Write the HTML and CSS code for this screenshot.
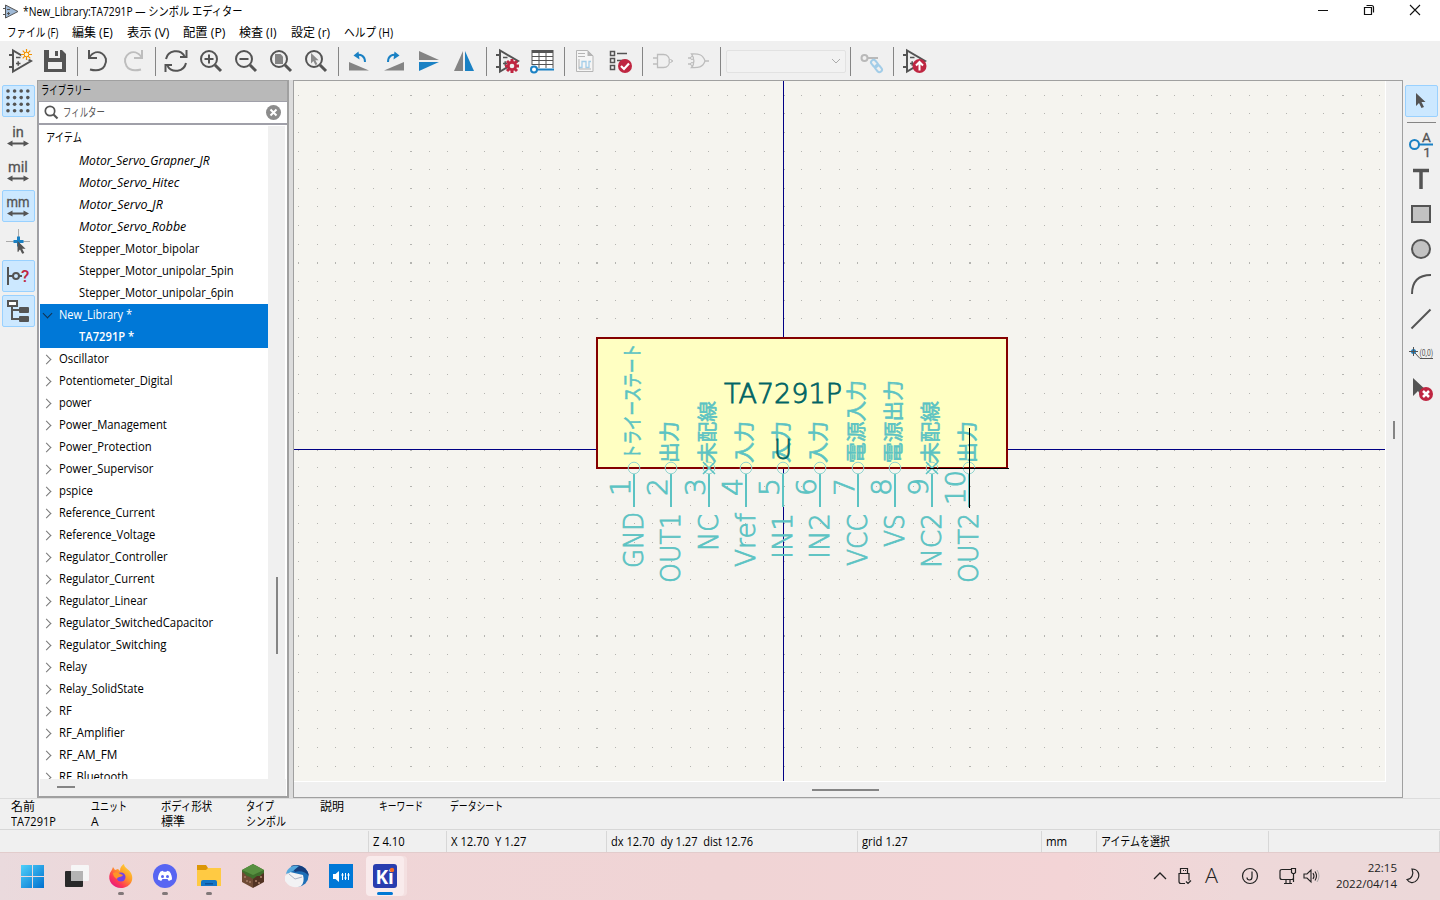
FILE: index.html
```html
<!DOCTYPE html>
<html lang="ja">
<head>
<meta charset="utf-8">
<title>*New_Library:TA7291P — シンボル エディター</title>
<link rel="stylesheet" href="styles.css">
</head>
<body>
<svg width="0" height="0" class="defs">
  <defs>
    <g id="amp"><path d="M5 1.500v21L23 12z M1 6h4 M1 18h4" fill="none" stroke="#545454" stroke-width="2"/><path d="M8 8.500h4.500 M8 14.500h4.500 M10.200 12.200v4.600" stroke="#545454" stroke-width="1.500"/></g>
    <g id="lens"><circle cx="10" cy="10" r="8" fill="none" stroke="#545454" stroke-width="2"/><path d="M16 16l6 6" stroke="#545454" stroke-width="3"/></g>
    <path id="dblarrow" d="M1 19.500l5.500-3v2h11v-2l5.500 3-5.500 3v-2h-11v2z" fill="#545454"/>
    <path id="pointer" d="M0 0v13l3-3 2.500 5 2.500-1-2.500-5h4z" fill="#545454"/>
  </defs>
</svg>
<div class="window">
  <header class="titlebar">
    <svg class="appicon" width="17" height="16" viewBox="0 0 17 16"><path d="M2.500 1v13L15 7.500z" fill="#9fb9d6" stroke="#555"/><path d="M0 4.500h3M0 10.500h3M4 5.500h3M4 9.500h3M5.500 8v3" stroke="#555"/></svg>
    <span class="t" data-w="220">*New_Library:TA7291P — シンボル エディター</span>
    <div class="winctl">
      <svg width="12" height="12"><path d="M1 6.500h10" stroke="#111"/></svg>
      <svg width="12" height="12"><path d="M1.500 3.500h7v7h-7zM3.500 1.500h5q2 0 2 2v5" fill="none" stroke="#111" stroke-width="1.200"/></svg>
      <svg width="12" height="12"><path d="M1 1l10 10M11 1L1 11" stroke="#111" stroke-width="1.100"/></svg>
    </div>
  </header>
  <nav class="menu">
    <span class="m1"><span class="t" data-w="51">ファイル (F)</span></span>
    <span class="m2"><span class="t" data-w="41">編集 (E)</span></span>
    <span class="m3"><span class="t" data-w="42">表示 (V)</span></span>
    <span class="m4"><span class="t" data-w="42">配置 (P)</span></span>
    <span class="m5"><span class="t" data-w="38">検査 (I)</span></span>
    <span class="m6"><span class="t" data-w="39">設定 (r)</span></span>
    <span class="m7"><span class="t" data-w="49">ヘルプ (H)</span></span>
  </nav>
  <div class="toolbar">
    <i><svg viewBox="0 0 24 24"><use href="#amp"/><circle cx="18.500" cy="5.500" r="5.500" fill="#f0f0f0"/><path d="M18.500 0v11M13 5.500h11M14.700 1.700l7.600 7.600M22.300 1.700l-7.600 7.600" stroke="#f29100" stroke-width="1.200"/><circle cx="18.500" cy="5.500" r="2.300" fill="#fff3d0" stroke="#f29100"/></svg></i>
    <i><svg viewBox="0 0 24 24"><path d="M1 1h18l4 4v18H1z" fill="#545454"/><path d="M6 1h11v8H6zM5 13h14v7H5z" fill="#f0f0f0"/><path d="M12 2h3v5h-3z" fill="#545454"/></svg></i>
    <b></b>
    <i><svg viewBox="0 0 24 24"><path d="M3 1v8h8M3.500 8C7 3 12 2 16 4.500S21.500 12 18.500 17 10 22 4 20.500" fill="none" stroke="#545454" stroke-width="2"/></svg></i>
    <i><svg viewBox="0 0 24 24"><path d="M21 1v8h-8M20.500 8C17 3 12 2 8 4.500S2.500 12 5.500 17 14 22 20 20.500" fill="none" stroke="#bdbdbd" stroke-width="2"/></svg></i>
    <b></b>
    <i><svg viewBox="0 0 24 24"><path d="M2 10C4 1 16-.5 20.500 7M22.500 1v7H16M22 14c-2 9-14 10.500-18.500 3M1.500 23v-7H8" fill="none" stroke="#545454" stroke-width="2"/></svg></i>
    <i><svg viewBox="0 0 24 24"><use href="#lens"/><path d="M5.500 10h9M10 5.500v9" stroke="#545454" stroke-width="2"/></svg></i>
    <i><svg viewBox="0 0 24 24"><use href="#lens"/><path d="M5.500 10h9" stroke="#545454" stroke-width="2"/></svg></i>
    <i><svg viewBox="0 0 24 24"><use href="#lens"/><path d="M6 5h5.500L14 7.500V15H6z" fill="#848484"/></svg></i>
    <i><svg viewBox="0 0 24 24"><use href="#lens"/><use href="#pointer" transform="translate(7 4) scale(.8)" opacity=".65"/></svg></i>
    <b></b>
    <i><svg viewBox="0 0 24 24"><path d="M2 13v8.500h20z" fill="#848484"/><path d="M18 13C18 7 14 5 9 6" fill="none" stroke="#1a81c4" stroke-width="2"/><path d="M11.500 2.500L6.500 6.500l6 4z" fill="#1a81c4"/></svg></i>
    <i><svg viewBox="0 0 24 24"><path d="M22 13v8.500H2z" fill="#848484"/><path d="M6 13C6 7 10 5 15 6" fill="none" stroke="#1a81c4" stroke-width="2"/><path d="M12.500 2.500L17.500 6.500l-6 4z" fill="#1a81c4"/></svg></i>
    <i><svg viewBox="0 0 24 24"><path d="M2 2v9h20z" fill="#848484"/><path d="M2 13v9l20-9z" fill="#1a81c4"/></svg></i>
    <i><svg viewBox="0 0 24 24"><path d="M11 2v20H2z" fill="#848484"/><path d="M13 2v20h9z" fill="#1a81c4"/></svg></i>
    <b></b>
    <i><svg viewBox="0 0 24 24"><use href="#amp"/><circle cx="17" cy="17" r="5" fill="#bf2641"/><path d="M17 10v14M10 17h14M12 12l10 10M22 12L12 22" stroke="#bf2641" stroke-width="3"/><circle cx="17" cy="17" r="2.300" fill="#f0f0f0"/></svg></i>
    <i><svg viewBox="0 0 24 24"><path d="M2 1h21v20H2z" fill="#fff"/><path d="M1.500 1h22v3h-22z" fill="#545454"/><path d="M2 4v12M9 4v15M16 4v15M23 4v15M2 7.500h21M2 11.500h21M2 15.500h21" stroke="#545454" fill="none"/><path d="M7 20.500h17" stroke="#1a81c4" stroke-width="2"/><circle cx="4" cy="20.500" r="3" fill="#fff" stroke="#1a81c4" stroke-width="2"/></svg></i>
    <b></b>
    <i><svg viewBox="0 0 24 24"><path d="M3.500 1.500h11L20 7v15.500H3.500z" fill="#f5f5f5" stroke="#b5b5b5"/><path d="M14.500 1v6h6z" fill="#b5b5b5"/><path d="M5 4.500h7M5 7.500h7" stroke="#b5b5b5"/><path d="M6 18.500h3v-6h4v6h3v-6h2" fill="none" stroke="#a3cde8" stroke-width="1.300"/><path d="M6 10v10h12" fill="none" stroke="#b5b5b5"/></svg></i>
    <i><svg viewBox="0 0 24 24"><path d="M2.500 2.500h4v4h-4zM2.500 9.500h4v4h-4zM2.500 16.500h4v4h-4z" fill="none" stroke="#545454" stroke-width="1.500"/><path d="M9 4.500h10M9 11.500h10" stroke="#545454" stroke-width="1.500"/><circle cx="17" cy="17" r="7" fill="#bf2641"/><path d="M13 17l3 3 5-5.500" fill="none" stroke="#fff" stroke-width="2.200"/></svg></i>
    <b></b>
    <i><svg viewBox="0 0 24 24"><path d="M6.500 5.500h6c8 0 8 13 0 13h-6zM2 9h4M2 15h4M20 12h2" fill="none" stroke="#bdbdbd" stroke-width="1.300"/><circle cx="19.500" cy="12" r="1.500" fill="#eee" stroke="#bdbdbd"/></svg></i>
    <i><svg viewBox="0 0 24 24"><path d="M5.500 5c5 0 11-1 13.500 7C16.500 19.500 10.500 18.500 5.500 18.500c3-4 3-9 0-13.500zM2 9h5M2 15h5M19 12h4" fill="none" stroke="#bdbdbd" stroke-width="1.300"/><circle cx="6" cy="9" r="1.500" fill="#eee" stroke="#bdbdbd"/><circle cx="6" cy="15" r="1.500" fill="#eee" stroke="#bdbdbd"/></svg></i>
    <b></b>
    <div class="combo"><svg width="10" height="6"><path d="M1 1l4 4 4-4" fill="none" stroke="#ababab"/></svg></div>
    <b></b>
    <i><svg viewBox="0 0 24 24"><circle cx="4.500" cy="9" r="3" fill="none" stroke="#b9b9b9" stroke-width="2"/><path d="M8 9h10" stroke="#b9b9b9" stroke-width="2"/><g fill="none" stroke="#a3cde8" stroke-width="2"><rect x="10.500" y="12" width="8" height="5" rx="2.500" transform="rotate(50 14.500 14.500)"/><rect x="14.500" y="17" width="8" height="5" rx="2.500" transform="rotate(50 18.500 19.500)"/></g></svg></i>
    <b></b>
    <i><svg viewBox="0 0 24 24"><use href="#amp" x="-1"/><circle cx="16.500" cy="17" r="7" fill="#bf2641"/><path d="M16.500 21.500v-8M13 16.500l3.500-3.500 3.500 3.500" fill="none" stroke="#fff" stroke-width="2"/></svg></i>
  </div>
  <main class="main">
    <aside class="left">
      <i class="on"><svg viewBox="0 0 24 24"><g id="dots" fill="#545454"></g></svg></i>
      <i><svg viewBox="0 0 24 24"><text x="12" y="12.500" class="unit">in</text><use href="#dblarrow"/></svg></i>
      <i><svg viewBox="0 0 24 24"><text x="12" y="12.500" class="unit">mil</text><use href="#dblarrow"/></svg></i>
      <i class="on"><svg viewBox="0 0 24 24"><text x="12" y="12.500" textLength="23" lengthAdjust="spacingAndGlyphs" class="unit">mm</text><use href="#dblarrow"/></svg></i>
      <i><svg viewBox="0 0 24 24"><path d="M0 12.500h24M12.500 0v23" stroke="#aaa"/><path d="M7.500 12.500h10M12.500 7.500v10" stroke="#1a81c4" stroke-width="3"/><use href="#pointer" transform="translate(11.500 12) scale(.85)"/></svg></i>
      <i class="on"><svg viewBox="0 0 24 24"><path d="M2 3v18M2 12h5M13 12h3" stroke="#545454" stroke-width="2"/><circle cx="10" cy="12" r="3" fill="none" stroke="#545454" stroke-width="2"/><text x="15" y="18" class="q">?</text></svg></i>
      <i class="on"><svg viewBox="0 0 24 24"><path d="M2 2h9v5H2zM6 7v13h8M6 11h8" fill="none" stroke="#545454" stroke-width="2"/><path d="M3 3h7v3H3z" fill="#fff"/><rect x="13" y="8" width="10" height="6" rx="1" fill="#545454"/><rect x="13" y="17" width="10" height="6" rx="1" fill="#545454"/></svg></i>
    </aside>
    <section class="library">
      <div class="libhead"><span class="t" data-w="50">ライブラリー</span></div>
      <div class="filter">
        <svg width="15" height="15"><circle cx="6" cy="6" r="4.700" fill="none" stroke="#555" stroke-width="1.700"/><path d="M9.500 9.500l4 4" stroke="#555" stroke-width="2.200"/></svg>
        <span class="t" data-w="42">フィルター</span>
        <svg class="clear" width="15" height="15"><circle cx="7.500" cy="7.500" r="7.500" fill="#8c8c8c"/><path d="M4.500 4.500l6 6M10.500 4.500l-6 6" stroke="#fff" stroke-width="2"/></svg>
      </div>
      <div class="treebox">
        <div class="tree">
          <div class="treehead"><span class="t" data-w="36">アイテム</span></div>
          <div class="row sub it"><span class="t" data-w="131">Motor_Servo_Grapner_JR</span></div>
          <div class="row sub it"><span class="t" data-w="100">Motor_Servo_Hitec</span></div>
          <div class="row sub it"><span class="t" data-w="84">Motor_Servo_JR</span></div>
          <div class="row sub it"><span class="t" data-w="107">Motor_Servo_Robbe</span></div>
          <div class="row sub"><span class="t" data-w="120">Stepper_Motor_bipolar</span></div>
          <div class="row sub"><span class="t" data-w="155">Stepper_Motor_unipolar_5pin</span></div>
          <div class="row sub"><span class="t" data-w="155">Stepper_Motor_unipolar_6pin</span></div>
          <div class="row sel open"><span class="t" data-w="73">New_Library *</span></div>
          <div class="row sel sub bold"><span class="t" data-w="55">TA7291P *</span></div>
          <div class="row lib"><span class="t" data-w="50">Oscillator</span></div>
          <div class="row lib"><span class="t" data-w="114">Potentiometer_Digital</span></div>
          <div class="row lib"><span class="t" data-w="33">power</span></div>
          <div class="row lib"><span class="t" data-w="108">Power_Management</span></div>
          <div class="row lib"><span class="t" data-w="93">Power_Protection</span></div>
          <div class="row lib"><span class="t" data-w="94">Power_Supervisor</span></div>
          <div class="row lib"><span class="t" data-w="34">pspice</span></div>
          <div class="row lib"><span class="t" data-w="96">Reference_Current</span></div>
          <div class="row lib"><span class="t" data-w="96">Reference_Voltage</span></div>
          <div class="row lib"><span class="t" data-w="109">Regulator_Controller</span></div>
          <div class="row lib"><span class="t" data-w="95">Regulator_Current</span></div>
          <div class="row lib"><span class="t" data-w="88">Regulator_Linear</span></div>
          <div class="row lib"><span class="t" data-w="154">Regulator_SwitchedCapacitor</span></div>
          <div class="row lib"><span class="t" data-w="108">Regulator_Switching</span></div>
          <div class="row lib"><span class="t" data-w="28">Relay</span></div>
          <div class="row lib"><span class="t" data-w="85">Relay_SolidState</span></div>
          <div class="row lib"><span class="t" data-w="13">RF</span></div>
          <div class="row lib"><span class="t" data-w="66">RF_Amplifier</span></div>
          <div class="row lib"><span class="t" data-w="58">RF_AM_FM</span></div>
          <div class="row lib"><span class="t" data-w="69">RF_Bluetooth</span></div>
        </div>
        <div class="vbar"><div></div></div>
        <div class="hbar"><div></div></div>
      </div>
    </section>
    <section class="canvas">
      <svg class="sheet" width="1091" height="700" viewBox="294 81 1091 700">
        <path id="grid" fill="#b4b4b0" shape-rendering="crispEdges"/>
        <path d="M783.500 81v700M294 449.500h1091" stroke="#000084" shape-rendering="crispEdges"/>
        <rect x="597" y="338" width="410" height="130" fill="#ffffc2" stroke="#840000" stroke-width="2"/>
        <g id="pins"></g>
        <text x="724" y="403" textLength="118" lengthAdjust="spacingAndGlyphs" class="field">TA7291P</text>
        <text x="774" y="459" textLength="18" lengthAdjust="spacingAndGlyphs" class="field">U</text>
        <path d="M969.500 428v80M929 468.500h80" stroke="#000" shape-rendering="crispEdges"/>
      </svg>
      <div class="cv"><div></div></div>
      <div class="ch"><div></div></div>
    </section>
    <aside class="right">
      <i class="on"><svg viewBox="0 0 24 24"><use href="#pointer" transform="translate(7 4)"/></svg></i>
      <hr>
      <i><svg viewBox="0 0 24 24"><path d="M10 12.500h14" stroke="#1a81c4" stroke-width="2"/><circle cx="5.500" cy="12.500" r="4.500" fill="none" stroke="#1a81c4" stroke-width="2"/><text x="17.500" y="9.500" class="pinlab">A</text><text x="18" y="24.500" class="pinlab">1</text></svg></i>
      <i><svg viewBox="0 0 24 24"><path d="M4 3.500h16M12 3v19" stroke="#545454" stroke-width="3.500"/></svg></i>
      <i><svg viewBox="0 0 24 24"><path d="M3 4h18v16H3z" fill="#c2c2c2" stroke="#545454" stroke-width="2"/></svg></i>
      <i><svg viewBox="0 0 24 24"><circle cx="12" cy="12" r="9" fill="#c2c2c2" stroke="#545454" stroke-width="2"/></svg></i>
      <i><svg viewBox="0 0 24 24"><path d="M3 22C3 10 9 3 22 3" fill="none" stroke="#545454" stroke-width="2"/></svg></i>
      <i><svg viewBox="0 0 24 24"><path d="M2.500 21.500l19-19" stroke="#545454" stroke-width="2"/></svg></i>
      <i><svg viewBox="0 0 24 24"><circle cx="4.500" cy="9.500" r="2.500" fill="#1a81c4"/><path d="M0 9.500h9M4.500 5v9M6 11l5 5.500h13" fill="none" stroke="#545454"/><text x="10.500" y="13.500" textLength="13.500" lengthAdjust="spacingAndGlyphs" class="coord">(0,0)</text></svg></i>
      <i><svg viewBox="0 0 24 24"><path d="M4 1v18l5-5 3 5 6-5z" fill="#545454"/><circle cx="17" cy="17" r="7" fill="#bf2641"/><path d="M14 14l6 6M20 14l-6 6" stroke="#fff" stroke-width="2.500"/></svg></i>
    </aside>
  </main>
  <section class="info">
    <div class="c1"><span class="t" data-w="24">名前</span><span class="t" data-w="45">TA7291P</span></div>
    <div class="c2"><span class="t" data-w="36">ユニット</span><span class="t" data-w="8">A</span></div>
    <div class="c3"><span class="t" data-w="51">ボディ形状</span><span class="t" data-w="24">標準</span></div>
    <div class="c4"><span class="t" data-w="28">タイプ</span><span class="t" data-w="40">シンボル</span></div>
    <div class="c5"><span class="t" data-w="24">説明</span></div>
    <div class="c6"><span class="t" data-w="44">キーワード</span></div>
    <div class="c7"><span class="t" data-w="53">データシート</span></div>
  </section>
  <footer class="status">
    <div class="s0"></div>
    <div class="s1"><span class="t" data-w="32">Z 4.10</span></div>
    <div class="s2"><span class="t" data-w="75">X 12.70&nbsp; Y 1.27</span></div>
    <div class="s3"><span class="t" data-w="142">dx 12.70&nbsp; dy 1.27&nbsp; dist 12.76</span></div>
    <div class="s4"><span class="t" data-w="46">grid 1.27</span></div>
    <div class="s5"><span class="t" data-w="21">mm</span></div>
    <div class="s6"><span class="t" data-w="69">アイテムを選択</span></div>
    <div class="s7"></div>
  </footer>
  <div class="taskbar">
    <div class="apps">
      <i><svg viewBox="0 0 24 24"><defs><linearGradient id="w" x2="1" y2="1"><stop stop-color="#4fd0fa"/><stop offset="1" stop-color="#0070cf"/></linearGradient></defs><path d="M0 1h11v11H0zM12 1h11v11H12zM0 13h11v11H0zM12 13h11v11H12z" fill="url(#w)"/></svg></i>
      <i><svg viewBox="0 0 24 24"><rect y="7" width="18" height="16" rx="1" fill="#292929"/><rect x="6" y="1" width="18" height="16" rx="1" fill="#f6f6f6"/><path d="M6 7h12v10H6z" fill="#b4b4b4"/></svg></i>
      <i class="run"><svg viewBox="0 0 24 24"><defs><linearGradient id="fx" x1="1" x2=".2" y2="1"><stop stop-color="#ffe83b"/><stop offset=".45" stop-color="#ff9a28"/><stop offset=".75" stop-color="#ff3b52"/><stop offset="1" stop-color="#e31587"/></linearGradient></defs><path d="M4 3l2 3 3-1 2 2c0-4 2-6 4-7 0 4 5 5 7 9 4 8-2 15-10 15S-2 17 1 9c1-2 2-3 3-6z" fill="url(#fx)"/><circle cx="12" cy="13" r="4.500" fill="#7542e5"/><path d="M4 9c4-2 6 1 10 2-2 3-5 1-6 4-2-1-4-3-4-6z" fill="#ff9428"/></svg></i>
      <i class="run"><svg viewBox="0 0 24 24"><circle cx="12" cy="12" r="12" fill="#5865f2"/><path d="M7.500 7.500l2.500-.7.500 1h3l.5-1 2.500.7c2 2.500 2.700 6 2.500 8l-3.200 1.500-1.300-2h-5l-1.300 2L5 15.500c-.2-2 .5-5.500 2.500-8z" fill="#fff"/><circle cx="9.500" cy="12.500" r="1.500" fill="#5865f2"/><circle cx="14.500" cy="12.500" r="1.500" fill="#5865f2"/></svg></i>
      <i class="run"><svg viewBox="0 0 24 24"><path d="M0 1h9l2 3h12v7H0z" fill="#dc9605"/><path d="M0 6h9l2-2h13v18H0z" fill="#ffca43"/><path d="M4 22v-4q0-2 2-2h12q2 0 2 2v4z" fill="#1476c6"/><path d="M8 19h8v1.500H8z" fill="#0a529c"/></svg></i>
      <i><svg viewBox="0 0 24 24"><path d="M1 6l11 5v13L1 18z" fill="#6f4a34"/><path d="M23 6l-11 5v13l11-6z" fill="#523222"/><path d="M12 0l11 6v3l-2 1-2 2-3 0-4 3-3-2-3-1-3-3-2-1V6z" fill="#3f6f2c"/><path d="M12 0l11 6-11 5L1 6z" fill="#579040"/><path d="M3 12h2v2H3zM8 17h2v2H8zM14 16h2v2h-2zM19 12h2v2h-2zM5 16h2v2H5zM17 18h2v2h-2z" fill="#98705a"/></svg></i>
      <i><svg viewBox="0 0 24 24"><circle cx="13" cy="12" r="10.500" fill="#1e6fb7"/><path d="M6 2c8-3 17 2 18 10-3-4-9-6-14-4z" fill="#153d7c"/><path d="M0 12l5-4 13 3q2 7-2 11-10 4-16-5z" fill="#f2f2f4"/><path d="M4 10l6 5 7-2" fill="none" stroke="#aab3c5"/><path d="M1 10C2 4 8 0 14 2L8 7z" fill="#54a8dd"/></svg></i>
      <i><svg viewBox="0 0 24 24"><path d="M0 0h24v24H0z" fill="#0078d7"/><path d="M4 10h2.500L10 7v11l-3.500-3H4z" fill="#fff"/><path d="M13.500 9v7M16.500 9v7M19.500 9v7" stroke="#fff"/><path d="M12.500 11h2M15.500 14h2M18.500 11h2" stroke="#fff" stroke-width="1.500"/></svg></i>
      <i class="active"><svg viewBox="0 0 24 24"><rect width="24" height="24" rx="3" fill="#293daf"/><text x="2.500" y="19.500" class="ki">Ki</text><circle cx="19" cy="6" r="2.200" fill="#f56a25"/></svg></i>
    </div>
    <div class="tray">
      <svg width="14" height="24"><path d="M1 15l6-6 6 6" fill="none" stroke="#222" stroke-width="1.300"/></svg>
      <svg class="usb" width="14" height="24"><path d="M3.500 9V4.500h7V9M6 6.500h1M8 6.500h1M8 19.500H4q-2 0-2-2V9.500h10v7M9 17.500l2 2 3-3" fill="none" stroke="#222" stroke-width="1.200"/></svg>
      <svg class="ime" width="14" height="24"><text x="0" y="19" textLength="13" lengthAdjust="spacingAndGlyphs" class="a">A</text></svg>
      <svg class="j" width="18" height="24"><circle cx="9" cy="12" r="7.500" fill="none" stroke="#222" stroke-width="1.200"/><path d="M11 7.500V13q0 3-2.500 3Q6 16 6 13.500" fill="none" stroke="#222" stroke-width="1.200"/></svg>
      <svg class="net" width="18" height="24"><path d="M12 5.500H3q-2 0-2 2v6q0 2 2 2h10q1 0 1-1M5 19.500h8M7 16v3M11 16v3M12.500 4.500h4v4l-1 1h-2l-1-1zM14.500 9v9" fill="none" stroke="#222" stroke-width="1.200"/></svg>
      <svg class="vol" width="18" height="24"><path d="M1 10h3l4-4v12l-4-4H1zM10 9q2 3 0 6M12 7.500q3 4.500 0 9" fill="none" stroke="#222" stroke-width="1.100"/><path d="M14 6q4 6 0 12" fill="none" stroke="#aaa"/></svg>
      <div class="clock"><span>22:15</span><span>2022/04/14</span></div>
      <svg class="moon" width="14" height="24"><path d="M6 5c6 0 9 6 5 11-3 4-8 3-10-.5C6 15 8 10 6 5z" fill="none" stroke="#222" stroke-width="1.200"/></svg>
    </div>
  </div>
</div>
<script src="app.js"></script>
</body>
</html>
```
FILE: styles.css
```css
* { box-sizing: border-box; }
body { margin: 0; width: 1440px; height: 900px; overflow: hidden; font: 12px/16px "Open Sans", "Noto Sans CJK JP", sans-serif; color: #000; }
svg { display: block; flex: none; overflow: visible; }
i { font-style: normal; }
.defs { position: absolute; }
.window { display: flex; flex-direction: column; height: 900px; background: #f0f0f0; }
.t { display: inline-block; white-space: pre; transform-origin: 0 50%; }
.titlebar { display: flex; align-items: center; height: 23px; background: #fff; padding-left: 3px; }
.titlebar > .t { margin-left: 3px; }
.winctl { display: flex; gap: 34px; margin-left: auto; padding: 0 19px 3px 0; }
.menu { display: flex; height: 18px; background: #fff; padding-left: 7px; line-height: 19px; }
.m1 { width: 65px; } .m2 { width: 55px; } .m3 { width: 56px; } .m4 { width: 56px; } .m5 { width: 52px; } .m6 { width: 53px; } .m7 { width: 60px; }
.toolbar { display: flex; align-items: center; height: 39px; padding: 1px 0 0 2.500px; }
.toolbar i { width: 35px; height: 35px; display: flex; align-items: center; justify-content: center; }
.toolbar i svg, .left i svg, .right i svg { width: 24px; height: 24px; }
.toolbar b { width: 8px; height: 29px; background: linear-gradient(#858585, #858585) 4px 0 / 1px 29px no-repeat; }
.combo { width: 120px; height: 23px; border: 1px solid #e2e2e2; border-radius: 2px; margin: 0 0 0 2.500px; display: flex; align-items: center; justify-content: flex-end; padding-right: 4px; background: #f2f2f2; }
.main { display: flex; height: 718px; }
.left { width: 37px; padding: 5px 0 0 2px; display: flex; flex-direction: column; gap: 3px; }
.left i, .right i { width: 33px; height: 32px; display: flex; align-items: center; justify-content: center; border: 1px solid transparent; border-radius: 2px; flex: none; padding-right: 1px; }
.left .on, .right .on { background: #cce8ff; border-color: #99d1ff; }
.unit { font: 400 14.500px Roboto, sans-serif; text-anchor: middle; fill: #545454; stroke: #545454; stroke-width: .3px; }
.q { font: 500 17px Roboto, sans-serif; fill: #bf2641; }
.library { width: 252px; border: 1px solid #a0a0a0; border-width: 1px 2px 2px 1px; background: #fff; display: flex; flex-direction: column; }
.libhead { height: 20px; background: #b9b9b9; padding-left: 3px; line-height: 20px; }
.filter { height: 24px; border: 1px solid #a0a0a9; border-width: 1px 0 2px 1px; display: flex; align-items: center; padding: 0 6px 0 5px; color: #555; }
.filter .t { margin-left: 4px; }
.clear { margin-left: auto; }
.treebox { flex: 1; display: grid; grid-template-columns: 228px 1fr; grid-template-rows: 653px 1fr; padding: 1px 1px 0; border-left: 1px solid #a0a0a9; }
.tree { overflow: hidden; }
.treehead { height: 24px; line-height: 24px; padding-left: 6px; }
.row { height: 22px; line-height: 22px; padding-left: 19px; position: relative; overflow: hidden; }
.sub { padding-left: 39px; }
.it { font-style: italic; }
.sel { background: #0078d7; color: #fff; }
.bold { font-weight: 600; }
.lib::before, .open::before { content: ""; position: absolute; left: 3px; top: 8px; width: 6px; height: 6px; border: solid #777; border-width: 1.300px 1.300px 0 0; transform: rotate(45deg); }
.open::before { transform: rotate(135deg); top: 6px; left: 4px; border-color: #12324f; }
.vbar, .hbar, .cv, .ch { background: #f0f0f0; }
.vbar { padding: 451px 0 0 8px; margin-right: 1px; }
.vbar div { width: 2px; height: 77px; background: #858585; }
.hbar { grid-column: 1 / 3; padding: 7px 0 0 17px; }
.hbar div { width: 18px; height: 2px; background: #858585; }
.canvas { width: 1110px; margin-left: 4px; box-shadow: -4px 0 #dcdcdc; border: 1px solid #a0a0a0; display: grid; grid-template-columns: 1092px 1fr; grid-template-rows: 701px 1fr; background: #fff; }
.sheet { background: #f5f4ef; overflow: hidden; }
.cv { padding: 340px 0 0 7px; }
.cv div { width: 2px; height: 18px; background: #858585; }
.ch { grid-column: 1 / 3; padding: 7px 0 0 518px; }
.ch div { width: 67px; height: 2px; background: #858585; }
.field { font: 200 27px "DejaVu Sans", sans-serif; fill: #006464; stroke: #006464; stroke-width: .8px; }
.pin { font: 200 27px "DejaVu Sans", sans-serif; fill: #5cc3c3; stroke: #5cc3c3; stroke-width: .8px; }
.jp { font: 400 20px "Noto Sans CJK JP", sans-serif; fill: #5cc3c3; stroke: #5cc3c3; stroke-width: .6px; }
.right { width: 37px; padding: 5px 0 0 2px; display: flex; flex-direction: column; gap: 3px; }
.right hr { width: 29px; height: 1px; border: 0; background: #858585; margin: 2px 0 2px 2px; }
.pinlab { font: 400 13.500px/1 Roboto, sans-serif; text-anchor: middle; fill: #545454; stroke: #545454; stroke-width: .3px; }
.coord { font: 9px Roboto, sans-serif; fill: #545454; }
.info { height: 31px; display: flex; padding-left: 11px; border-top: 1px solid #dcdcdc; line-height: 15px; }
.info > div { display: flex; flex-direction: column; align-items: flex-start; }
.c1 { width: 80px; } .c2 { width: 70px; } .c3 { width: 85px; } .c4 { width: 74px; } .c5 { width: 59px; } .c6 { width: 71px; } .c7 { width: 80px; }
.status { height: 23px; display: flex; border-top: 1px solid #d7d7d7; }
.status > div { border-right: 1px solid #d7d7d7; padding-left: 4px; height: 21px; margin-top: 1px; line-height: 22px; }
.s0 { width: 369px; } .s1 { width: 78px; } .s2 { width: 160px; } .s3 { width: 251px; } .s4 { width: 184px; } .s5 { width: 55px; } .s6 { width: 172px; } .s7 { width: 171px; }
.taskbar { height: 48px; display: flex; background: linear-gradient(90deg, #eadadd 0, #efd6d8 14%, #f0d4d5 50%, #f3d4d6 74%, #eed8d9 86%, #ecd8d9); border-top: 1px solid #e2cccc; }
.apps { display: flex; gap: 4px; padding: 3px 0 0 13px; }
.apps i { width: 40px; height: 40px; display: flex; align-items: center; justify-content: center; position: relative; border-radius: 4px; }
.apps svg { width: 24px; height: 24px; }
.apps .active { width: 38px; margin-left: 1px; background: #f9ebec; box-shadow: 3px 0 #f4e0e1; }
.run::after, .active::after { content: ""; position: absolute; bottom: 1px; left: 17px; width: 6px; height: 3px; border-radius: 2px; background: #817879; }
.active::after { left: 11px; width: 16px; background: #0078d4; }
.ki { font: 700 19px "Open Sans", sans-serif; fill: #fff; }
.tray { margin-left: auto; display: flex; padding: 11px 20px 0 0; }
.usb { margin-left: 10px; } .ime { margin-left: 14px; } .j { margin-left: 22px; } .net { margin-left: 20px; } .vol { margin-left: 6px; } .moon { margin-left: 9px; }
.a { font: 300 21px "Open Sans", sans-serif; fill: #222; }
.clock { width: 76px; margin-top: -4px; display: flex; flex-direction: column; align-items: flex-end; line-height: 16px; font-size: 11.500px; color: #222; }
```
FILE: app.js
```js
const NS = 'http://www.w3.org/2000/svg';

// Fit each label into its column width.
document.querySelectorAll('.t').forEach(el => {
  const w = +el.dataset.w;
  el.style.transform = 'scaleX(' + w / el.offsetWidth + ')';
  el.style.marginRight = w - el.offsetWidth + 'px';
});

// Grid dots around the origin; every tenth line is heavier.
let d = '';
for (let i = -26; i <= 32; i++) {
  for (let j = -19; j <= 17; j++) {
    const x = Math.floor(783.2 + i * 18.64), y = Math.floor(449.3 + j * 18.64);
    const w = i % 10 === 0 ? 2 : 1, h = j % 10 === 0 ? 2 : 1;
    d += `M${x} ${y}h${w}v${h}h-${w}z`;
  }
}
document.getElementById('grid').setAttribute('d', d);

function add(parent, tag, attrs, text) {
  const e = document.createElementNS(NS, tag);
  for (const k in attrs) e.setAttribute(k, attrs[k]);
  if (text) e.textContent = text;
  parent.appendChild(e);
}
const dots = document.getElementById('dots');
for (let i = 0; i < 16; i++) add(dots, 'circle', { cx: 2 + (i % 4) * 6.6, cy: 2 + (i >> 2) * 6.6, r: 1.8 });

// x, number, name, name span, type, type span
const pins = [
  [634, '1', 'GND', 568, 512, 'トライーステート', 459, 344],
  [671, '2', 'OUT1', 583, 513, '出力', 463, 421],
  [709, '3', 'NC', 551, 514, '未配線', 463, 401],
  [746, '4', 'Vref', 567, 513, '入力', 463, 421],
  [783, '5', 'IN1', 559, 513, '入力', 463, 421],
  [820, '6', 'IN2', 559, 513, '入力', 463, 421],
  [858, '7', 'VCC', 566, 514, '電源入力', 463, 380],
  [895, '8', 'VS', 547, 514, '電源出力', 463, 380],
  [932, '9', 'NC2', 568, 513, '未配線', 463, 401],
  [969, '10', 'OUT2', 583, 513, '出力', 463, 421]
];
const g = document.getElementById('pins');
const vtext = (cls, x, y0, y1, s) => add(g, 'text', {
  class: cls, transform: `translate(${x} ${y0}) rotate(-90)`, textLength: y0 - y1, lengthAdjust: 'spacingAndGlyphs'
}, s);
pins.forEach(([x, num, name, a, b, type, c, e]) => {
  add(g, 'path', { d: `M${x} 474V507`, stroke: '#5cc3c3', 'stroke-width': 2 });
  add(g, 'circle', { cx: x, cy: 468, r: 5.8, fill: 'none', stroke: '#93d6d0' });
  if (name[0] === 'N') add(g, 'path', { d: `M${x - 6} 462l12 12M${x + 6} 462l-12 12`, stroke: '#5cc3c3', 'stroke-width': 1.5 });
  vtext('jp', x + 6, c, e, type);
  vtext('pin', x - 4, num === '10' ? 505 : 496, num === '10' ? 470 : 478, num);
  vtext('pin', x + 9, a, b, name);
});
```
